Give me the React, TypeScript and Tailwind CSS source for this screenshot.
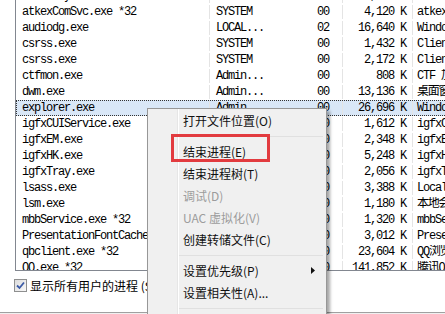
import type { ReactNode } from "react";

type Proc = {
  name: string;
  user: string;
  cpu: string;
  mem: string;
  desc: string;
};

const PROCS: Proc[] = [
  { name: "AsusTray.exe", user: "Admin...", cpu: "00", mem: "2,316 K", desc: "Asus Tray" },
  { name: "atkexComSvc.exe *32", user: "SYSTEM", cpu: "00", mem: "4,120 K", desc: "atkexComSvc" },
  { name: "audiodg.exe", user: "LOCAL...", cpu: "02", mem: "16,640 K", desc: "Windows 音频设备图形隔离" },
  { name: "csrss.exe", user: "SYSTEM", cpu: "00", mem: "1,432 K", desc: "Client Server Runtime" },
  { name: "csrss.exe", user: "SYSTEM", cpu: "00", mem: "2,172 K", desc: "Client Server Runtime" },
  { name: "ctfmon.exe", user: "Admin...", cpu: "00", mem: "808 K", desc: "CTF 加载程序" },
  { name: "dwm.exe", user: "Admin...", cpu: "00", mem: "13,136 K", desc: "桌面窗口管理器" },
  { name: "explorer.exe", user: "Admin...", cpu: "00", mem: "26,696 K", desc: "Windows 资源管理器" },
  { name: "igfxCUIService.exe", user: "SYSTEM", cpu: "00", mem: "1,612 K", desc: "igfxCUIService Module" },
  { name: "igfxEM.exe", user: "Admin...", cpu: "00", mem: "2,348 K", desc: "igfxEM Module" },
  { name: "igfxHK.exe", user: "Admin...", cpu: "00", mem: "5,248 K", desc: "igfxHK Module" },
  { name: "igfxTray.exe", user: "Admin...", cpu: "00", mem: "2,056 K", desc: "igfxTray Module" },
  { name: "lsass.exe", user: "SYSTEM", cpu: "00", mem: "3,388 K", desc: "Local Security Authority" },
  { name: "lsm.exe", user: "SYSTEM", cpu: "00", mem: "1,180 K", desc: "本地会话管理器服务" },
  { name: "mbbService.exe *32", user: "SYSTEM", cpu: "00", mem: "1,320 K", desc: "mbbService" },
  { name: "PresentationFontCache.exe", user: "LOCAL...", cpu: "00", mem: "3,012 K", desc: "PresentationFontCache.exe" },
  { name: "qbclient.exe *32", user: "Admin...", cpu: "00", mem: "23,604 K", desc: "QQ浏览器" },
  { name: "QQ.exe *32", user: "Admin...", cpu: "00", mem: "141,852 K", desc: "腾讯QQ" },
];

const SELECTED = 7;

function ProcessRow({ proc, selected }: { proc: Proc; selected: boolean }) {
  return (
    <div
      className={
        selected
          ? "flex h-[16px] items-center border border-dotted border-[#333] bg-[#d9e7f7]"
          : "flex h-[16px] items-center border border-transparent"
      }
    >
      <div className="h-full w-[193px] shrink-0 overflow-hidden whitespace-nowrap border-r border-[#e4e4e4] pl-[5px] leading-[14px]">
        {proc.name}
      </div>
      <div className="h-full w-[72px] shrink-0 overflow-hidden whitespace-nowrap pl-[6px] leading-[14px]">
        {proc.user}
      </div>
      <div className="h-full w-[61px] shrink-0 whitespace-nowrap border-r border-[#e4e4e4] pr-[13px] text-right leading-[14px]">
        {proc.cpu}
      </div>
      <div className="h-full w-[70px] shrink-0 whitespace-nowrap border-r border-[#e4e4e4] pr-[6px] text-right leading-[14px]">
        {proc.mem}
      </div>
      <div className="h-full w-[180px] shrink-0 overflow-hidden whitespace-nowrap pl-[4px] leading-[14px]">
        {proc.desc}
      </div>
    </div>
  );
}

function MenuItem({
  children,
  disabled,
  submenu,
}: {
  children: ReactNode;
  disabled?: boolean;
  submenu?: boolean;
}) {
  return (
    <div
      className={
        "relative flex h-[22px] items-center pl-[35px] " +
        (disabled ? "text-[#9c9c9c]" : "text-[#111]")
      }
    >
      {children}
      {submenu ? (
        <svg
          className="absolute right-[11px] top-[7px]"
          width="4"
          height="7"
          viewBox="0 0 4 7"
        >
          <path d="M0 0 L4 3.5 L0 7 Z" fill="#111" />
        </svg>
      ) : null}
    </div>
  );
}

function MenuSeparator() {
  return (
    <div className="flex h-[9px] items-center pl-[31px] pr-[3px]">
      <div className="h-[2px] w-full border-t border-[#e0e0e0] border-b-white" />
    </div>
  );
}

function ContextMenu() {
  return (
    <div className="absolute left-[147px] top-[108px] w-[180px] border border-[#979797] bg-[#f0f0f0] pt-[1px] font-[family-name:'Noto_Sans_CJK_SC',sans-serif] text-[12px] shadow-[3px_3px_3px_rgba(0,0,0,0.35)]">
      <div className="absolute bottom-0 left-[29px] top-0 w-[2px] border-l border-[#e6e6e6] bg-white" />
      <MenuItem>打开文件位置(O)</MenuItem>
      <MenuSeparator />
      <MenuItem>结束进程(E)</MenuItem>
      <MenuItem>结束进程树(T)</MenuItem>
      <MenuItem disabled>调试(D)</MenuItem>
      <MenuItem disabled>UAC 虚拟化(V)</MenuItem>
      <MenuItem>创建转储文件(C)</MenuItem>
      <MenuSeparator />
      <MenuItem submenu>设置优先级(P)</MenuItem>
      <MenuItem>设置相关性(A)...</MenuItem>
      <MenuSeparator />
      <MenuItem>属性(R)</MenuItem>
      {/* annotation box around 结束进程 */}
      <div className="absolute left-[23px] top-[25px] h-[28px] w-[99px] border-[3px] border-[#e23b3f]" />
    </div>
  );
}

function CheckBox() {
  return (
    <div className="flex h-[13px] w-[13px] items-center justify-center border border-[#8e8f8f] bg-gradient-to-br from-[#dcdcdc] to-[#f8f8f8]">
      <svg width="9" height="9" viewBox="0 0 9 9">
        <path
          d="M1 4.5 L3.5 7 L8 1.5"
          fill="none"
          stroke="#3b5aa6"
          strokeWidth="1.8"
        />
      </svg>
    </div>
  );
}

export default function App() {
  return (
    <div className="relative h-[314px] w-[445px] overflow-hidden bg-white text-black">
      <div className="flex flex-col">
        <div className="ml-[15px] h-[271px] w-[620px] overflow-hidden border-b border-l border-[#828790] font-[family-name:'Liberation_Mono','Noto_Sans_CJK_SC',monospace] text-[12px] tracking-[-1.2px]">
          <div className="-mt-[12px] flex flex-col">
            {PROCS.map((proc, i) => (
              <ProcessRow key={i} proc={proc} selected={i === SELECTED} />
            ))}
          </div>
        </div>
        <div className="flex h-[42px] items-start gap-[3px] border-b border-[#a0a0a0] pl-[14px] pt-[8px] font-[family-name:'Noto_Sans_CJK_SC',sans-serif] text-[12px]">
          <CheckBox />
          <span className="leading-[13px]">显示所有用户的进程 (S)</span>
        </div>
        <div className="h-[2px] bg-[#f0f0f0]" />
      </div>
      <ContextMenu />
    </div>
  );
}
